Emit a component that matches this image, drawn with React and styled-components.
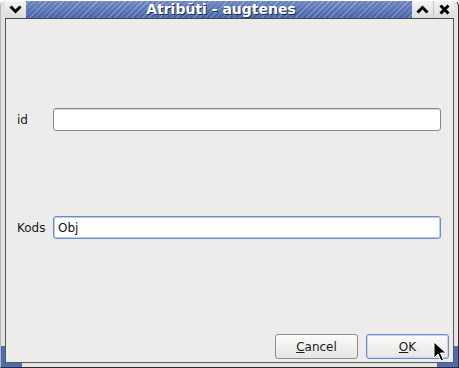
import styled, { createGlobalStyle } from "styled-components";

const Global = createGlobalStyle`
  html, body { margin: 0; padding: 0; background: #ffffff; }
  body { font-family: "DejaVu Sans", "Liberation Sans", sans-serif; font-size: 12px; color: #1a1a1a; }
`;

const Window = styled.div`
  position: relative;
  width: 459px;
  height: 368px;
  box-sizing: border-box;
  background: #e4e3e1;
  border-top-left-radius: 6px;
  border-top-right-radius: 6px;
  border-right: 1px solid #2b2b2b;
  border-bottom: 1px solid #2b2b2b;
  border-left: 1px solid #b9b8b6;
  border-top: 1px solid #ffffff;
  padding: 0 4px 4px 4px;
  display: flex;
  flex-direction: column;
  overflow: hidden;
`;

const TitleBar = styled.div`
  display: flex;
  height: 17px;
  border-bottom: 1px solid #3f4a5e;
`;

const CtrlButton = styled.div`
  width: ${(p) => p.$w || 21}px;
  display: flex;
  align-items: center;
  justify-content: center;
  background: linear-gradient(#f4f3f2, #dedcda);
  border-left: ${(p) => (p.$sep ? "1px solid #c9c7c4" : "none")};
`;

const Stripe = styled.div`
  flex: 1;
  display: flex;
  align-items: center;
  justify-content: center;
  background:
    linear-gradient(rgba(255, 255, 255, 0.18), rgba(0, 0, 0, 0.08)),
    repeating-linear-gradient(135deg, #4e6db5 0 2px, #7893d0 2px 3px, #4e6db5 3px 4px);
`;

const Title = styled.span`
  font-weight: bold;
  font-size: 14px;
  line-height: 17px;
  color: #ffffff;
  text-shadow: 1px 1px 0 #1e2b4a;
  margin-left: 4px;
`;

const Body = styled.div`
  flex: 1;
  background: #edeceb;
  border: 1px solid #5a5a5a;
  border-top: none;
  display: flex;
  flex-direction: column;
  padding: 0 12px 0 11px;
`;

const Row = styled.div`
  display: flex;
  align-items: center;
  margin-top: ${(p) => p.$top}px;
`;

const Label = styled.label`
  width: 36px;
  font-size: 12px;
  color: #1a1a1a;
`;

const Field = styled.div`
  flex: 1;
  height: 23px;
  box-sizing: border-box;
  background: #ffffff;
  border: 1px solid ${(p) => (p.$focus ? "#6d8dc8" : "#8a8986")};
  border-radius: 3px;
  box-shadow: ${(p) => (p.$focus ? "inset 0 0 0 1px #b9cbea" : "inset 0 1px 0 #d8d7d5")};
  padding: 0 4px;
  display: flex;
  align-items: center;
  font-size: 12px;
  color: #111;
`;

const ButtonBar = styled.div`
  display: flex;
  justify-content: flex-end;
  gap: 8px;
  margin-top: auto;
  margin-bottom: 3px;
  margin-right: -8px;
`;

const Button = styled.button`
  width: 83px;
  height: 25px;
  box-sizing: border-box;
  font-family: "DejaVu Sans", "Liberation Sans", sans-serif;
  font-size: 12px;
  color: #1a1a1a;
  background: linear-gradient(#fbfbfa, #e6e5e3);
  border: 1px solid ${(p) => (p.$default ? "#6d8dc8" : "#8f8d8a")};
  border-radius: 3px;
  box-shadow: ${(p) => (p.$default ? "inset 0 0 0 1px #c4d3ee" : "none")};
  padding: 0;
  u { text-decoration: underline; }
`;

const Grip = styled.div`
  position: absolute;
  background: #4d6bb3;
`;

const Cursor = styled.svg`
  position: absolute;
  left: 432px;
  top: 340px;
`;

export default function App() {
  return (
    <>
      <Global />
      <Window>
        <TitleBar>
          <CtrlButton $w={21}>
            <svg width="13" height="9" viewBox="0 0 13 9">
              <path d="M1.5 1.5 L6.5 6.5 L11.5 1.5" stroke="#000" strokeWidth="3" fill="none" />
            </svg>
          </CtrlButton>
          <Stripe>
            <Title>Atribūti - augtenes</Title>
          </Stripe>
          <CtrlButton $w={21}>
            <svg width="13" height="9" viewBox="0 0 13 9">
              <path d="M1.5 7.5 L6.5 2.5 L11.5 7.5" stroke="#000" strokeWidth="3" fill="none" />
            </svg>
          </CtrlButton>
          <CtrlButton $w={20} $sep>
            <svg width="11" height="11" viewBox="0 0 11 11">
              <path d="M1.5 1.5 L9.5 9.5 M9.5 1.5 L1.5 9.5" stroke="#000" strokeWidth="3" />
            </svg>
          </CtrlButton>
        </TitleBar>
        <Body>
          <Row $top={89}>
            <Label>id</Label>
            <Field />
          </Row>
          <Row $top={85}>
            <Label>Kods</Label>
            <Field $focus>Obj</Field>
          </Row>
          <ButtonBar>
            <Button>
              <u>C</u>ancel
            </Button>
            <Button $default>
              <u>O</u>K
            </Button>
          </ButtonBar>
        </Body>
        <Grip style={{ left: 0, bottom: 1, width: 4, height: 20 }} />
        <Grip style={{ left: 0, bottom: 0, width: 21, height: 4 }} />
        <Grip style={{ right: 0, bottom: 1, width: 4, height: 20 }} />
        <Grip style={{ right: 0, bottom: 0, width: 21, height: 4 }} />
        <Cursor width="14" height="22" viewBox="0 0 14 22">
          <path d="M1 1 L1 17 L5 13 L8 20 L10.5 19 L7.5 12 L13 12 Z" fill="#000" stroke="#fff" strokeWidth="1" />
        </Cursor>
      </Window>
    </>
  );
}
